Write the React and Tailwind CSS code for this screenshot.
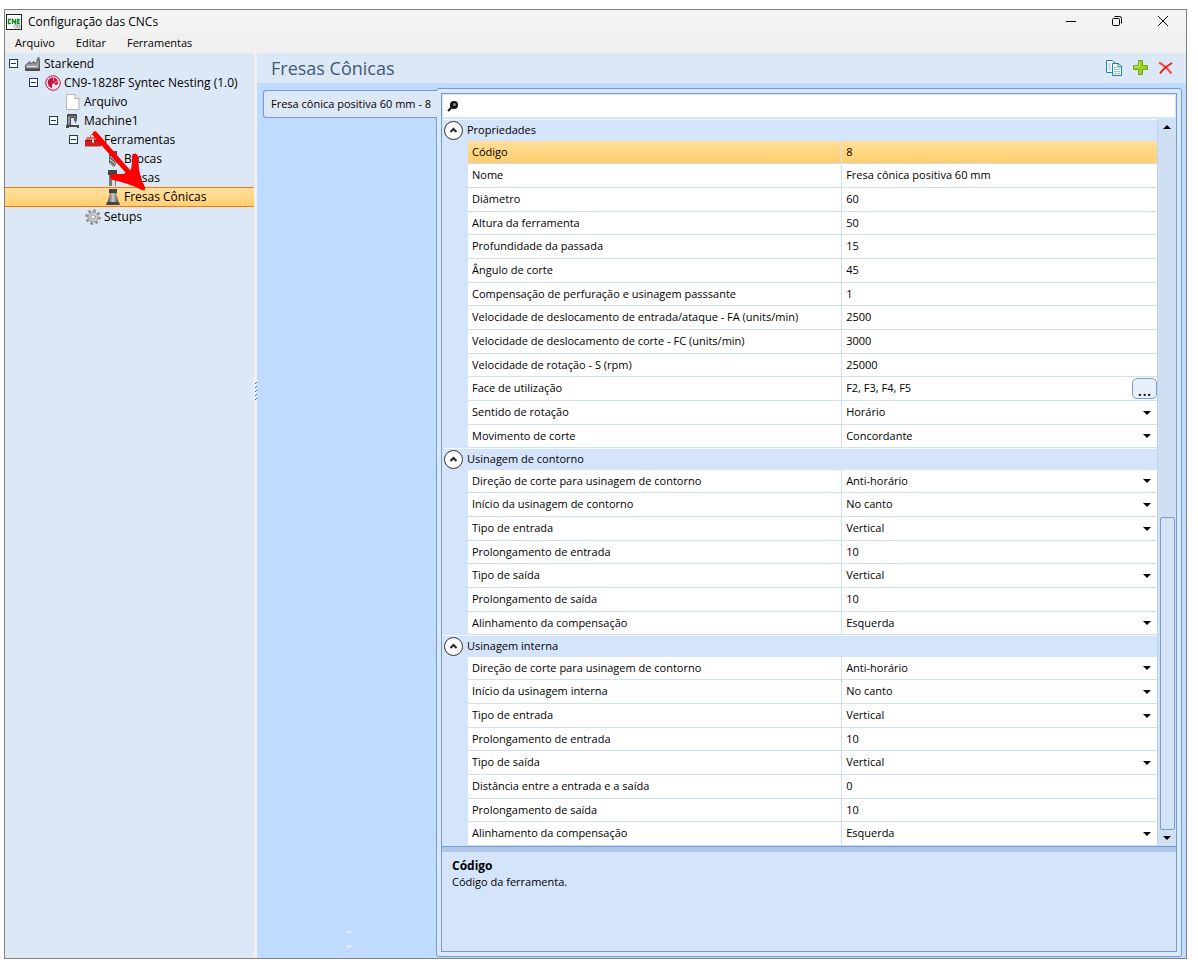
import React from 'react';

const propertyGroups = [
  {
    title: 'Propriedades',
    rows: [
      { label: 'Código', value: '8', selected: true },
      { label: 'Nome', value: 'Fresa cônica positiva 60 mm' },
      { label: 'Diâmetro', value: '60' },
      { label: 'Altura da ferramenta', value: '50' },
      { label: 'Profundidade da passada', value: '15' },
      { label: 'Ângulo de corte', value: '45' },
      { label: 'Compensação de perfuração e usinagem passsante', value: '1' },
      { label: 'Velocidade de deslocamento de entrada/ataque - FA (units/min)', value: '2500' },
      { label: 'Velocidade de deslocamento de corte - FC (units/min)', value: '3000' },
      { label: 'Velocidade de rotação - S (rpm)', value: '25000' },
      { label: 'Face de utilização', value: 'F2, F3, F4, F5', browse: true },
      { label: 'Sentido de rotação', value: 'Horário', options: ['Horário', 'Anti-horário'] },
      { label: 'Movimento de corte', value: 'Concordante', options: ['Concordante', 'Discordante'] },
    ],
  },
  {
    title: 'Usinagem de contorno',
    rows: [
      { label: 'Direção de corte para usinagem de contorno', value: 'Anti-horário', options: ['Horário', 'Anti-horário'] },
      { label: 'Início da usinagem de contorno', value: 'No canto', options: ['No canto', 'No meio'] },
      { label: 'Tipo de entrada', value: 'Vertical', options: ['Vertical', 'Linear'] },
      { label: 'Prolongamento de entrada', value: '10' },
      { label: 'Tipo de saída', value: 'Vertical', options: ['Vertical', 'Linear'] },
      { label: 'Prolongamento de saída', value: '10' },
      { label: 'Alinhamento da compensação', value: 'Esquerda', options: ['Esquerda', 'Direita'] },
    ],
  },
  {
    title: 'Usinagem interna',
    rows: [
      { label: 'Direção de corte para usinagem de contorno', value: 'Anti-horário', options: ['Horário', 'Anti-horário'] },
      { label: 'Início da usinagem interna', value: 'No canto', options: ['No canto', 'No meio'] },
      { label: 'Tipo de entrada', value: 'Vertical', options: ['Vertical', 'Linear'] },
      { label: 'Prolongamento de entrada', value: '10' },
      { label: 'Tipo de saída', value: 'Vertical', options: ['Vertical', 'Linear'] },
      { label: 'Distância entre a entrada e a saída', value: '0' },
      { label: 'Prolongamento de saída', value: '10' },
      { label: 'Alinhamento da compensação', value: 'Esquerda', options: ['Esquerda', 'Direita'] },
    ],
  },
];

// Icons
const AppIcon = () => (
  <svg width="16" height="16" viewBox="0 0 16 16" aria-hidden="true">
    <rect x="0.5" y="0.5" width="15" height="15" fill="#fff" stroke="#222" />
    <path d="M5 5.5H2.5v4H5M6.500 10V5.500l3 4V5M14 5.500h-2.500v4H14M11.500 7.500h2" fill="none" stroke="#138a2c" strokeWidth="1.400" />
    <circle cx="9.500" cy="12.500" r="1.500" fill="none" stroke="#999" />
    <circle cx="12.800" cy="12.500" r="1.500" fill="none" stroke="#888" />
  </svg>
);

const FactoryIcon = () => (
  <svg width="16" height="16" viewBox="0 0 16 16" aria-hidden="true">
    <path d="M0.5 14.500V9L5 5.500V8l4-2.500V8l3-2V3.500h2.500v11z" fill="#9a9a9a" stroke="#5a5a5a" />
    <path d="M2 10.500h10" stroke="#e8e8e8" />
    <path d="M1 13.500h14" stroke="#444" strokeWidth="2" />
    <path d="M13.500 1v2" stroke="#777" strokeWidth="2" />
  </svg>
);

const SyntecIcon = () => (
  <svg width="16" height="16" viewBox="0 0 16 16" aria-hidden="true">
    <circle cx="8" cy="8" r="7.300" fill="#f3e3ec" stroke="#c8143c" />
    <path d="M8 2.500C4.500 2.500 2.500 5 2.800 8c.3 3 2.200 4.500 4.200 5V9.500L9 8l1.500 2H12c1.500-1.500 1.500-4 0-5.500S10 2.500 8 2.500z" fill="#c8143c" />
    <path d="M8.500 3v3M12.500 6.500L9.500 7.500" stroke="#f3e3ec" strokeWidth="0.800" />
  </svg>
);

const FileIcon = () => (
  <svg width="16" height="16" viewBox="0 0 16 16" aria-hidden="true">
    <path d="M1.500 0.500h8.500l4 4v11h-12.500z" fill="#fdfdfd" stroke="#b4b4b4" />
    <path d="M10 0.500v4h4" fill="#e8e8e8" stroke="#b4b4b4" />
  </svg>
);

const MachineIcon = () => (
  <svg width="16" height="16" viewBox="0 0 16 16" aria-hidden="true">
    <path d="M2.500 12V1.500h9v4h-2v-1h-4V12z" fill="#9a9a9a" stroke="#444" />
    <path d="M3 2h8v1.500H3z" fill="#555" />
    <path d="M9 5.500h3V8H9zM10 8h1v2h-1z" fill="#666" />
    <path d="M1 12h13v3h-2v-1H4v1H1z" fill="#4a4a4a" />
  </svg>
);

const ToolboxIcon = () => (
  <svg width="16" height="16" viewBox="0 0 16 16" aria-hidden="true">
    <path d="M5.500 5.500v-2l1-1h3l1 1v2" fill="none" stroke="#777" />
    <path d="M2 5h12l2 4H0z" fill="#ea6a62" />
    <path d="M0 8h16v6.500H0z" fill="#cc1f1f" />
    <path d="M0 8h16v1H0z" fill="#8e1414" />
    <rect x="7" y="7.500" width="2" height="3" fill="#f2f2f2" />
  </svg>
);

const DrillIcon = () => (
  <svg width="16" height="16" viewBox="0 0 16 16" aria-hidden="true">
    <path d="M4 0h8v5H4z" fill="#555" />
    <path d="M4.500 5h7v6.500L9 15.500 4.500 12z" fill="#d4d4d4" stroke="#666" />
    <path d="M5 6.500l5.500 5M5 10l4.500 4M7.500 5.500L11 8.500" stroke="#555" strokeWidth="1.500" />
  </svg>
);

const MillIcon = () => (
  <svg width="16" height="16" viewBox="0 0 16 16" aria-hidden="true">
    <path d="M3 0h9v5H3z" fill="#444" />
    <path d="M4 5h7v11H4z" fill="#777" />
    <path d="M7 5h3v11H7z" fill="#ddd" />
  </svg>
);

const ConeMillIcon = () => (
  <svg width="16" height="16" viewBox="0 0 16 16" aria-hidden="true">
    <defs>
      <linearGradient id="cone">
        <stop offset="0" stopColor="#444" />
        <stop offset="0.5" stopColor="#ccc" />
        <stop offset="1" stopColor="#444" />
      </linearGradient>
    </defs>
    <path d="M4 0h8v4.500H4z" fill="#444" />
    <path d="M5 4.500h6L13.500 13h-11z" fill="url(#cone)" />
    <path d="M2 13h12l1 3H1z" fill="#444" />
  </svg>
);

const GearIcon = () => (
  <svg width="16" height="16" viewBox="0 0 16 16" aria-hidden="true">
    <circle cx="8" cy="8" r="6.600" fill="none" stroke="#8c8c8c" strokeWidth="2.400" strokeDasharray="2.600 2.580" />
    <circle cx="8" cy="8" r="5" fill="#d4d4d4" stroke="#8c8c8c" />
    <circle cx="8" cy="8" r="2.300" fill="#eef3fa" stroke="#8c8c8c" />
  </svg>
);

const CopyIcon = () => (
  <svg width="16" height="16" viewBox="0 0 16 16" aria-hidden="true">
    <path d="M0.500 0.500h6l3 3v9h-9z" fill="#fff" stroke="#1c7fae" />
    <path d="M2 4h3M2 6h3M2 8h3M2 10h3" stroke="#8ec5e0" />
    <path d="M6.500 3.500h6l3 3v9h-9z" fill="#fff" stroke="#1c7fae" />
    <path d="M12 3.500v3.500h3.500" fill="none" stroke="#1c7fae" />
    <path d="M8 7.500h3M8 9.500h6M8 11.500h6M8 13.500h6" stroke="#8ec5e0" />
  </svg>
);

const AddIcon = () => (
  <svg width="16" height="16" viewBox="0 0 16 16" aria-hidden="true">
    <path d="M6.500 0.500h4v5h5v4h-5v5h-4v-5h-5v-4h5z" fill="#9bd01f" stroke="#6fa614" />
    <path d="M7.500 1.500v5h-5" fill="none" stroke="#c8ea6a" />
  </svg>
);

const DeleteIcon = () => (
  <svg width="16" height="16" viewBox="0 0 16 16" aria-hidden="true">
    <path d="M1 2.500C5 4.500 9 8 13.500 13.500" fill="none" stroke="#ff4a4a" strokeWidth="2" />
    <path d="M14 3C9 6 5 9 2 13.500" fill="none" stroke="#f01818" strokeWidth="2" />
  </svg>
);

const SearchIcon = () => (
  <svg width="12" height="12" viewBox="0 0 12 12" aria-hidden="true">
    <circle cx="7" cy="5" r="4" fill="#111" />
    <circle cx="7.500" cy="4.500" r="1.500" fill="#7a8a9a" />
    <path d="M4.500 7.500L1 11" stroke="#111" strokeWidth="2" />
  </svg>
);

const Triangle = ({ up, className }) => (
  <svg width="8" height="4" viewBox="0 0 8 4" className={className} aria-hidden="true">
    <path d={up ? 'M0 4L4 0L8 4z' : 'M0 0L4 4L8 0z'} fill="currentColor" />
  </svg>
);

const treeItems = [
  { label: 'Starkend', Icon: FactoryIcon, indent: 'pl-1', expandable: true },
  { label: 'CN9-1828F Syntec Nesting (1.0)', Icon: SyntecIcon, indent: 'pl-6', expandable: true },
  { label: 'Arquivo', Icon: FileIcon, indent: 'pl-15' },
  { label: 'Machine1', Icon: MachineIcon, indent: 'pl-11', expandable: true },
  { label: 'Ferramentas', Icon: ToolboxIcon, indent: 'pl-16', expandable: true },
  { label: 'Brocas', Icon: DrillIcon, indent: 'pl-25' },
  { label: 'Fresas', Icon: MillIcon, indent: 'pl-25' },
  { label: 'Fresas Cônicas', Icon: ConeMillIcon, indent: 'pl-25', selected: true },
  { label: 'Setups', Icon: GearIcon, indent: 'pl-20' },
];

const TitleBar = () => (
  <header className="flex h-[23px] items-center bg-[#f3f3f3] pl-px">
    <AppIcon />
    <h1 className="ml-1.5 flex-1 text-[12px]">Configuração das CNCs</h1>
    <div className="flex items-center gap-8 pr-4">
      <button type="button" aria-label="Minimizar" className="flex h-5 w-3.5 items-center justify-center">
        <svg width="12" height="12" viewBox="0 0 12 12"><path d="M1 5.500h10" stroke="#000" /></svg>
      </button>
      <button type="button" aria-label="Restaurar" className="flex h-5 w-3.5 items-center justify-center">
        <svg width="12" height="12" viewBox="0 0 12 12">
          <rect x="1.500" y="2.500" width="7" height="7" rx="1" fill="none" stroke="#000" />
          <path d="M3.500 0.500h5a2 2 0 0 1 2 2v5" fill="none" stroke="#000" />
        </svg>
      </button>
      <button type="button" aria-label="Fechar" className="flex h-5 w-3.5 items-center justify-center">
        <svg width="12" height="12" viewBox="0 0 12 12"><path d="M1 0l10 10M11 0L1 10" stroke="#000" /></svg>
      </button>
    </div>
  </header>
);

const MenuBar = () => (
  <nav className="flex h-5 items-center gap-[21px] bg-[#f0f0f0] pl-2.5 text-[11px]">
    <button type="button">Arquivo</button>
    <button type="button">Editar</button>
    <button type="button">Ferramentas</button>
  </nav>
);

const Tree = () => (
  <aside className="relative w-[249px] shrink-0 bg-[#dde8f6] pt-px">
    <ul>
      {treeItems.map(({ label, Icon, indent, expandable, selected }) => (
        <li
          key={label}
          className={selected ? 'border-y border-[#ff7300] bg-linear-to-b from-[#ffe0a0] to-[#ffcf70]' : ''}
        >
          <div className={`flex items-center text-[12px] ${indent} ${selected ? 'h-[18px]' : 'h-[19px]'}`}>
            {expandable && (
              <button
                type="button"
                aria-label={`Recolher ${label}`}
                className="mr-[7px] flex size-[9px] shrink-0 items-center justify-center border border-[#1c3a66] bg-white"
              >
                <span className="h-px w-[5px] bg-[#1c3a66]" />
              </button>
            )}
            <Icon />
            <span className="ml-[3px]">{label}</span>
          </div>
        </li>
      ))}
    </ul>
    {/* pointer to the selected node */}
    <svg width="70" height="70" viewBox="0 0 70 70" className="absolute top-[74px] left-[82px]" aria-hidden="true">
      <path d="M8 7L44 48" stroke="#ff0000" strokeWidth="5" strokeLinecap="round" />
      <path
        d="M45 30c0-5 6-4 6 0l1 12c1 7 3 12 6 18 1 3-1 4-3 3-10-5-19-8-29-10-4-1-4-6 0-6 6 0 12 0 16-1 3-4 3-10 3-16z"
        fill="#ff0000"
      />
    </svg>
  </aside>
);

const Splitter = () => (
  <div className="flex w-[3px] shrink-0 flex-col items-center justify-center bg-[#f0f0f0]">
    <svg width="3" height="20" viewBox="0 0 3 20" className="-mt-57" aria-hidden="true">
      {[0, 4, 8, 12, 16].map((y) => (
        <path key={y} d={`M1 ${y + 1}h1v1h-1zM2 ${y}h1v1h-1z`} fill="#2a6fd0" />
      ))}
    </svg>
  </div>
);

const PropertyRow = ({ id, row }) => (
  <tr className={`h-6 nth-[3n+1]:h-[23px] ${row.selected ? 'bg-linear-to-b from-[#ffdf9a] to-[#ffcd68]' : 'bg-white'}`}>
    <th scope="row" className="border-r border-b border-[#d0dff2] p-0 pl-1 text-left font-normal">
      <label htmlFor={id}>{row.label}</label>
    </th>
    <td className="border-b border-[#d0dff2] p-0 pl-1">
      <div className="flex items-center">
        {row.options ? (
          <>
            <select id={id} defaultValue={row.value} className="min-w-0 flex-1 appearance-none bg-transparent">
              {row.options.map((option) => (
                <option key={option}>{option}</option>
              ))}
            </select>
            <Triangle className="mr-1.5" />
          </>
        ) : (
          <input id={id} type="text" defaultValue={row.value} className="min-w-0 flex-1 bg-transparent" />
        )}
        {row.browse && (
          <button
            type="button"
            aria-label="Selecionar faces"
            className="h-[21px] w-[25px] rounded-[5px] border border-[#7a9cc8] bg-[#e8f0fc] text-[18px] leading-3"
          >
            ...
          </button>
        )}
      </div>
    </td>
  </tr>
);

const PropertyGroup = ({ group, index }) => (
  <section>
    <div className="flex h-[22px] items-center border-t border-[#f4f9ff] pl-px">
      <button
        type="button"
        aria-label={`Recolher ${group.title}`}
        className="flex size-[19px] items-center justify-center rounded-full border border-[#333] bg-white"
      >
        <svg width="9" height="9" viewBox="0 0 9 9"><path d="M1.500 6l3-3 3 3" fill="none" stroke="#222" strokeWidth="2" /></svg>
      </button>
      <h3 className="ml-1">{group.title}</h3>
    </div>
    <div className="pl-[25px]">
      <table className="w-full table-fixed border-separate border-spacing-0">
        <colgroup>
          <col className="w-[54.3%]" />
          <col />
        </colgroup>
        <tbody>
          {group.rows.map((row, i) => (
            <PropertyRow key={row.label} id={`prop-${index}-${i}`} row={row} />
          ))}
        </tbody>
      </table>
    </div>
  </section>
);

const ScrollBar = () => (
  <div className="flex w-[18px] shrink-0 flex-col items-center bg-[#cfdff4] py-1.5">
    <Triangle up />
    <div className="grow-[389]" />
    <div className="w-[15px] grow-[312] rounded-[2px] border border-[#7a9cc8] bg-[#d3e2f4]" />
    <Triangle className="mt-1.5" />
  </div>
);

const PropertyPanel = () => (
  <div className="flex flex-1 flex-col rounded-[3px] border border-[#6f9bd8] bg-[#dde8f6] p-1">
    <div className="flex flex-1 flex-col border border-[#6f9bd8] bg-[#d4e5fb]">
      <label className="m-px mb-0 flex h-[22px] items-center bg-white pl-1">
        <SearchIcon />
        <input type="search" aria-label="Pesquisar propriedades" className="ml-1 flex-1 outline-none" />
      </label>
      <div className="flex pt-0.5 pl-px">
        <div className="flex-1">
          {propertyGroups.map((group, index) => (
            <PropertyGroup key={group.title} group={group} index={index} />
          ))}
        </div>
        <div className="w-px bg-[#bcd3f0]" />
        <ScrollBar />
      </div>
      <div className="h-1.5 border-t border-[#6f9bd8] bg-[#b0c7e7]" />
      <div className="flex-1 px-2.5 pt-1.5 leading-4">
        <h3 className="text-[12px] font-bold">Código</h3>
        <p>Código da ferramenta.</p>
      </div>
    </div>
  </div>
);

function App() {
  return (
    <div className="flex min-h-screen flex-col bg-white pt-[9px] pr-[11px] pb-[13px] pl-1 font-['Open_Sans','Noto_Sans',sans-serif] text-[11px] text-black">
      <div className="flex flex-1 flex-col border border-[#808080]">
        <TitleBar />
        <MenuBar />
        <div className="flex flex-1">
          <Tree />
          <Splitter />
          <main className="flex flex-1 flex-col bg-[#bfdbff]">
            <div className="flex h-[30px] items-center justify-between bg-[#dde8f6] pr-3 pl-3.5">
              <h2 className="text-[18px] text-[#3f5a78]">Fresas Cônicas</h2>
              <div className="flex gap-2.5">
                <button type="button" aria-label="Copiar"><CopyIcon /></button>
                <button type="button" aria-label="Adicionar"><AddIcon /></button>
                <button type="button" aria-label="Excluir"><DeleteIcon /></button>
              </div>
            </div>
            <div className="flex flex-1 pt-[5px] pr-1 pb-px pl-1.5">
              <div className="flex w-[173px] shrink-0 flex-col justify-between pt-0.5">
                <button
                  type="button"
                  className="relative z-10 -mr-px h-7 rounded-l-[3px] border border-r-0 border-[#6f9bd8] bg-[#dde8f6] pl-[7px] text-left whitespace-nowrap"
                >
                  Fresa cônica positiva 60 mm - 8
                </button>
                <div className="flex flex-col items-center gap-3 pr-0.5 pb-2 text-[#dfecff]">
                  <Triangle up />
                  <Triangle />
                </div>
              </div>
              <PropertyPanel />
            </div>
          </main>
        </div>
      </div>
    </div>
  );
}

export default App;
